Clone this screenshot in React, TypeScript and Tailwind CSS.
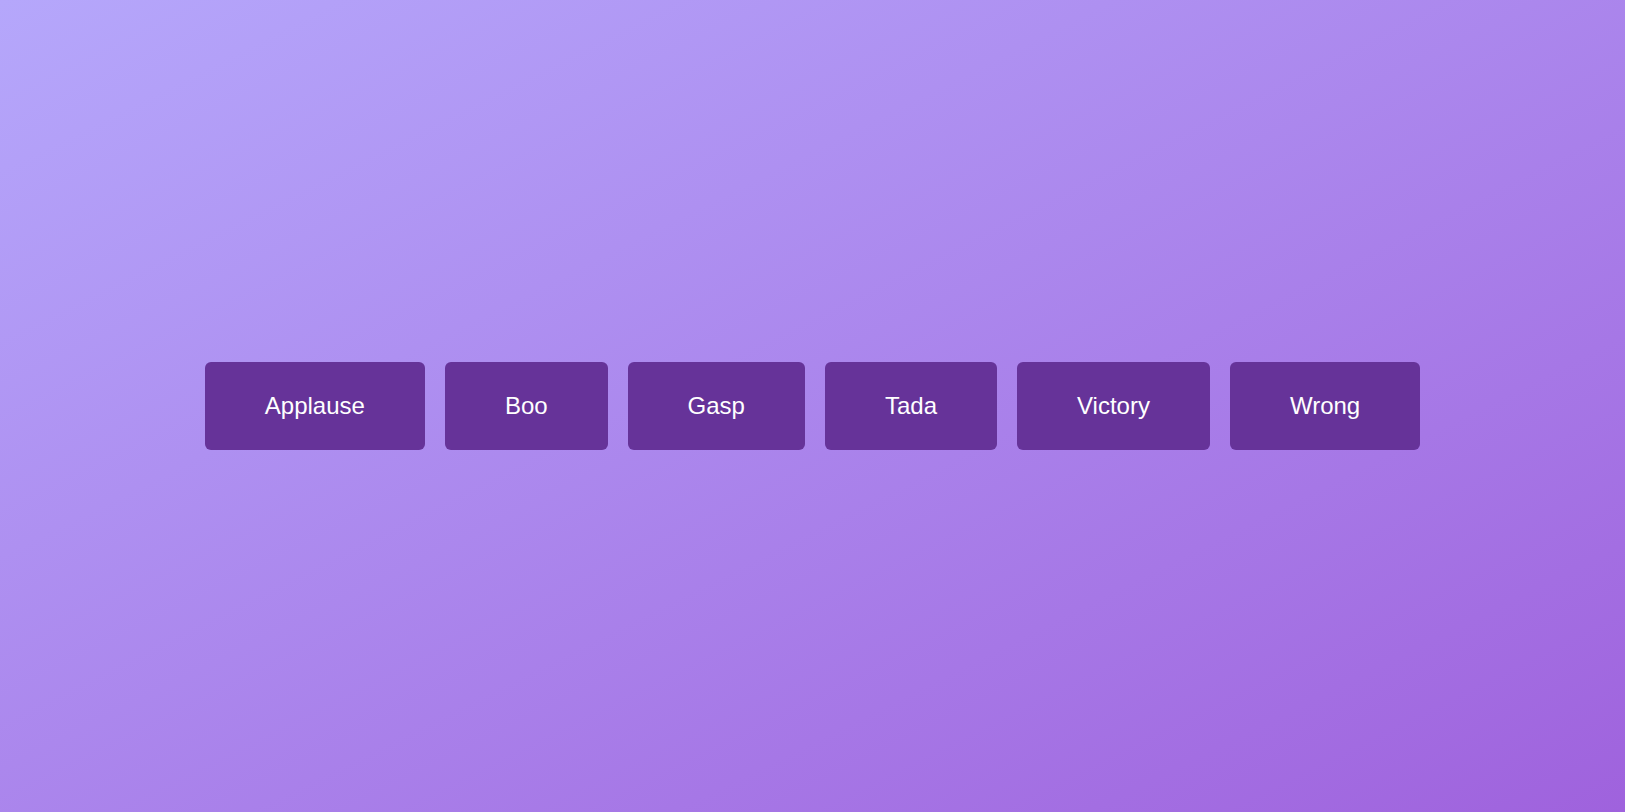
const sounds = ['Applause', 'Boo', 'Gasp', 'Tada', 'Victory', 'Wrong']

export default function App() {
  return (
    <div className="flex h-screen w-full items-center justify-center bg-gradient-to-br from-[#b5a7fb] to-[#9f62dd] font-['Liberation_Sans',Arial,sans-serif]">
      <div className="flex gap-5">
        {sounds.map((s) => (
          <button
            key={s}
            className="rounded-md bg-[#663399] px-[60px] py-[30px] text-[24px] leading-[normal] text-white"
          >
            {s}
          </button>
        ))}
      </div>
    </div>
  )
}
